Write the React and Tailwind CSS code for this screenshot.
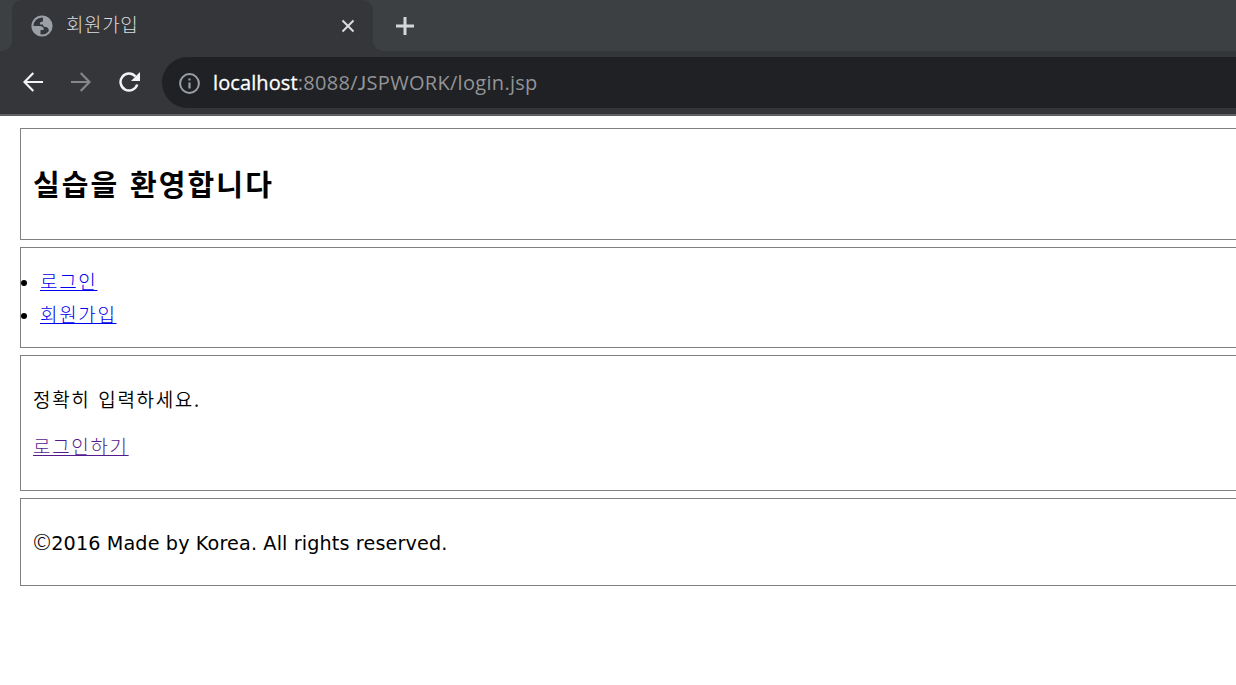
import React from 'react';

function Globe() {
  return (
    <svg className="h-[22px] w-[22px] shrink-0" viewBox="0 0 22 22">
      <circle cx="11" cy="11" r="9.6" fill="none" stroke="#9aa0a6" strokeWidth="2" />
      <path fill="#9aa0a6" d="M1.500 11H8C11.500 11 13 12.500 12.700 15H9.500V20C5 19.500 1.500 16 1.500 11Z" />
      <path fill="#9aa0a6" d="M12 2C17 2 20.500 6 20.500 11C20.500 14 19.500 15.500 18 17C18 13.500 16.500 12 14.500 12C12.500 12 12 11 12 9.500H9C8.500 7.500 9.500 6.500 12 6.500Z" />
    </svg>
  );
}

function TabStrip() {
  return (
    <div className="flex h-[51px] bg-[#3c4043]">
      <div className="w-3 bg-[#35363a]"><div className="h-full rounded-br-[10px] bg-[#3c4043]" /></div>
      <div className="w-[361px] bg-[#3c4043]">
        <div className="flex h-full items-center rounded-t-[10px] bg-[#35363a] pl-[19px] pr-[18px]">
          <Globe />
          <span className="mb-1 ml-[13px] flex-1 font-['Noto_Sans_CJK_KR',sans-serif] text-[19px] font-light leading-6 tracking-[0.6px] text-[#dadbde]">회원가입</span>
          <svg className="h-3.5 w-3.5" viewBox="0 0 14 14" fill="none" stroke="#dadce0" strokeWidth="2"><path d="M1.500 1.500 12.500 12.500M12.500 1.500 1.500 12.500" /></svg>
        </div>
      </div>
      <div className="flex-1 bg-[#35363a]">
        <div className="flex h-full items-center rounded-bl-[10px] bg-[#3c4043] pl-[23px]">
          <svg className="h-[18px] w-[18px]" viewBox="0 0 18 18" stroke="#d5d6d7" strokeWidth="3"><path d="M9 0V18M0 9H18" /></svg>
        </div>
      </div>
    </div>
  );
}

function Toolbar() {
  return (
    <div className="flex h-[65px] items-center border-b-2 border-[#5f6063] bg-[#35363a] pl-[23px]">
      <svg className="mb-0.5 h-5 w-5" viewBox="0 0 20 20" fill="none" stroke="#f1f3f4" strokeWidth="2.200"><path d="M20 10H1.600M10.300 1 1.500 10 10.300 19" /></svg>
      <svg className="mb-0.5 ml-7 h-5 w-5" viewBox="0 0 20 20" fill="none" stroke="#86878a" strokeWidth="2.200"><path d="M0 10H18.400M9.700 1 18.500 10 9.700 19" /></svg>
      <svg className="mb-0.5 ml-7 h-5 w-[21px]" viewBox="0 0 21 20"><path d="M16.500 4.500A8.500 8.500 0 1 0 18.200 12.500" fill="none" stroke="#f1f3f4" strokeWidth="2.500" /><path d="M21 0V9H12Z" fill="#f1f3f4" /></svg>
      <div className="ml-[22px] flex h-[51px] flex-1 items-center rounded-l-full bg-[#202124] pl-[17px]">
        <svg className="mt-0.5 h-[21px] w-[21px]" viewBox="0 0 21 21"><circle cx="10.500" cy="10.500" r="9.400" fill="none" stroke="#9aa0a6" strokeWidth="2" /><path d="M9.400 9.500H11.600V15.500H9.400ZM9.400 5.500H11.600V7.600H9.400Z" fill="#9aa0a6" /></svg>
        <span className="ml-[13px] font-['Open_Sans',sans-serif] text-[20px] leading-6 tracking-[0.3px] text-[#929497]"><span className="tracking-[0.1px] text-white [-webkit-text-stroke:0.3px_white]">localhost</span>:8088/<span className="font-['Lato',sans-serif]">J</span>SPWORK/login.jsp</span>
      </div>
    </div>
  );
}

export default function App() {
  return (
    <div className="h-[685px] w-full overflow-hidden bg-white">
      <TabStrip />
      <Toolbar />
      <main className="flex flex-col gap-[7px] pl-5 pt-3 font-['Noto_Sans_CJK_KR',sans-serif] text-[19px] font-light tracking-[1.65px] text-black">
        <header className="flex h-28 items-center border border-r-0 border-[#808080] pb-[3px] pl-3">
          <h2 className="text-[29px] font-bold leading-9 tracking-[2.1px] [word-spacing:2px]">실습을 환영합니다</h2>
        </header>
        <nav className="h-[101px] border border-r-0 border-[#808080] pt-4">
          <ul className="leading-[33px] text-[#0000ee]">
            <li className="flex items-center"><i className="mr-[13px] mt-1 h-1.5 w-1.5 rounded-full bg-black" /><a className="underline" href="#">로그인</a></li>
            <li className="flex items-center"><i className="mr-[13px] mt-1 h-1.5 w-1.5 rounded-full bg-black" /><a className="underline" href="#">회원가입</a></li>
          </ul>
        </nav>
        <section className="flex h-[136px] flex-col gap-3.5 border border-r-0 border-[#808080] pl-3 pt-[26px] leading-[33px]">
          <p className="font-[350] [word-spacing:2px]">정확히 입력하세요.</p>
          <p><a className="text-[#551a8b] underline" href="#">로그인하기</a></p>
        </section>
        <footer className="flex h-[88px] items-center border border-r-0 border-[#808080] pl-3 pt-0.5">
          <p className="font-['DejaVu_Sans',sans-serif] text-[19.2px] font-normal leading-7 tracking-[0.13px]"><span className="font-['Noto_Sans_CJK_KR',sans-serif] text-[22px] font-light leading-none">©</span>2016 Made by Korea. All rights reserved.</p>
        </footer>
      </main>
    </div>
  );
}
